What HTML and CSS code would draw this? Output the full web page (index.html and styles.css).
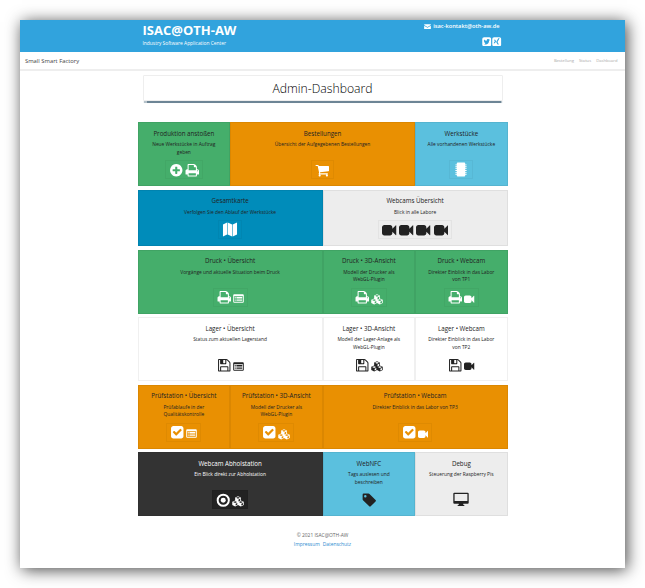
FILE: index.html
```html
<!DOCTYPE html>
<html lang="de">
<head>
<meta charset="utf-8">
<title>Admin-Dashboard</title>
<link rel="stylesheet" href="styles.css">
</head>
<body>
<svg class="sprite" aria-hidden="true">
  <symbol id="plus" viewBox="0 0 1792 1792"><path d="M1344 960v-128q0-26-19-45t-45-19h-256v-256q0-26-19-45t-45-19h-128q-26 0-45 19t-19 45v256h-256q-26 0-45 19t-19 45v128q0 26 19 45t45 19h256v256q0 26 19 45t45 19h128q26 0 45-19t19-45v-256h256q26 0 45-19t19-45zm320-64q0 209-103 385.500t-279.500 279.500-385.500 103-385.500-103-279.500-279.500-103-385.500 103-385.500 279.500-279.500 385.500-103 385.500 103 279.500 279.500 103 385.500z"/></symbol>
  <symbol id="print" viewBox="0 0 1792 1792"><path d="M448 1536h896v-256h-896v256zm0-640h896v-384h-160q-40 0-68-28t-28-68v-160h-640v640zm1152 64q0-26-19-45t-45-19-45 19-19 45 19 45 45 19 45-19 19-45zm128 0v416q0 13-9.500 22.500t-22.500 9.500h-224v160q0 40-28 68t-68 28h-960q-40 0-68-28t-28-68v-160h-224q-13 0-22.500-9.500t-9.500-22.500v-416q0-79 56.500-135.500t135.500-56.500h64v-544q0-40 28-68t68-28h672q40 0 88 20t76 48l152 152q28 28 48 76t20 88v256h64q79 0 135.500 56.500t56.500 135.500z"/></symbol>
  <symbol id="cart" viewBox="0 0 1792 1792"><path d="M704 1536q0 52-38 90t-90 38-90-38-38-90 38-90 90-38 90 38 38 90zm896 0q0 52-38 90t-90 38-90-38-38-90 38-90 90-38 90 38 38 90zm128-1088v512q0 24-16.500 42.500t-40.500 21.500l-1044 122q13 60 13 70 0 16-24 64h920q26 0 45 19t19 45-19 45-45 19h-1024q-26 0-45-19t-19-45q0-11 8-31.500t16-36 21.500-40 15.500-29.500l-177-823h-204q-26 0-45-19t-19-45 19-45 45-19h256q16 0 28.500 6.500t19.500 15.500 13 24.500 8 26 5.500 29.500 4.500 26h1201q26 0 45 19t19 45z"/></symbol>
  <symbol id="video" viewBox="0 0 1792 1792"><path d="M1792 352v1088q0 42-39 59-13 5-25 5-27 0-45-19l-403-403v166q0 119-84.500 203.500t-203.500 84.500h-704q-119 0-203.500-84.500t-84.500-203.500v-704q0-119 84.500-203.500t203.500-84.500h704q119 0 203.500 84.500t84.500 203.500v165l403-402q18-19 45-19 12 0 25 5 39 17 39 59z"/></symbol>
  <symbol id="save" viewBox="0 0 1792 1792"><path d="M512 1536h768v-384h-768v384zm896 0h128v-896q0-14-10-38.500t-20-34.500l-281-281q-10-10-34-20t-39-10v416q0 40-28 68t-68 28h-576q-40 0-68-28t-28-68v-416h-128v1280h128v-416q0-40 28-68t68-28h832q40 0 68 28t28 68v416zm-384-928v-320q0-13-9.500-22.500t-22.500-9.500h-192q-13 0-22.500 9.500t-9.500 22.500v320q0 13 9.500 22.500t22.500 9.500h192q13 0 22.500-9.500t9.500-22.500zm640 32v928q0 40-28 68t-68 28h-1344q-40 0-68-28t-28-68v-1344q0-40 28-68t68-28h928q40 0 88 20t76 48l280 280q28 28 48 76t20 88z"/></symbol>
  <symbol id="check" viewBox="0 0 1792 1792"><path d="M813 1299l614-614q19-19 19-45t-19-45l-102-102q-19-19-45-19t-45 19l-467 467-211-211q-19-19-45-19t-45 19l-102 102q-19 19-19 45t19 45l358 358q19 19 45 19t45-19zm851-883v960q0 119-84.500 203.500t-203.500 84.500h-960q-119 0-203.500-84.500t-84.500-203.500v-960q0-119 84.500-203.500t203.500-84.500h960q119 0 203.500 84.500t84.500 203.500z"/></symbol>
  <symbol id="chip" viewBox="0 0 14 16"><path d="M3.500.5h7a1 1 0 0 1 1 1v13a1 1 0 0 1-1 1h-7a1 1 0 0 1-1-1v-13a1 1 0 0 1 1-1zM1 2.600h12v.9H1zM1 4.600h12v.9H1zM1 6.600h12v.9H1zM1 8.600h12v.9H1zM1 10.600h12v.9H1zM1 12.600h12v.9H1z"/></symbol>
  <symbol id="map" viewBox="0 0 16 16"><path d="M.5 2.700 4.900.5v12.800L.5 15.500zM5.500.5l4.800 2.200v12.800l-4.800-2.200zM10.900 2.700 15.500.5v12.800l-4.600 2.200z"/></symbol>
  <symbol id="list" viewBox="0 0 11 9"><path fill-rule="evenodd" d="M1.200.3h8.600a1 1 0 0 1 1 1v6.400a1 1 0 0 1-1 1H1.200a1 1 0 0 1-1-1V1.300a1 1 0 0 1 1-1zM1.100 2.300v5.500h8.800V2.300z"/><path d="M1.700 3h1v.9h-1zM3.400 3h5.900v.9H3.400zM1.700 4.600h1v.9h-1zM3.400 4.600h5.900v.9H3.400zM1.700 6.200h1v.9h-1zM3.400 6.200h5.900v.9H3.400z"/></symbol>
  <symbol id="cubes" viewBox="0 0 24 22"><path fill-rule="evenodd" d="M12 .5l5.700 2.500v5.800L23.500 11.500v6.300L17.700 21 12 18.200 6.300 21 .5 17.800v-6.300L6.300 8.800V3zM8 3.500l4 1.800 4-1.800-4-1.600zM13 7v4l3.200-1.600V5.600zM2.300 12l4 1.800 4-1.800-4-1.700zM7.300 15.500v3.700l3.300-1.700v-3.600zM13.700 12l4 1.800 4-1.800-4-1.700zM18.700 15.500v3.700l3.300-1.700v-3.600z"/></symbol>
  <symbol id="target" viewBox="0 0 14 14"><circle cx="7" cy="7" r="5.400" fill="none" stroke="currentColor" stroke-width="1.900"/><circle cx="7" cy="7" r="2.400"/></symbol>
  <symbol id="tag" viewBox="0 0 14 14"><path fill-rule="evenodd" d="M.6 1.600a1 1 0 0 1 1-1h4.500q.8 0 1.400.6l5.600 5.600q.7.700 0 1.400l-4.700 4.700q-.7.700-1.400 0L1.200 7.300Q.6 6.800.6 6zM3.200 2a1.200 1.200 0 1 0 0 2.400 1.200 1.200 0 0 0 0-2.400z"/></symbol>
  <symbol id="monitor" viewBox="0 0 16 14"><path fill-rule="evenodd" d="M1.300.3h13.400q1 0 1 1v8.900q0 1-1 1h-4.400v1.200h1v1.200H4.700v-1.200h1v-1.200H1.300q-1 0-1-1V1.300q0-1 1-1zM1.600 1.600v7h12.800v-7z"/></symbol>
  <symbol id="mail" viewBox="0 0 14 11"><path d="M1 .3h12q.7 0 .7.800v.7L7 6 .3 1.800v-.7Q.3.300 1 .3zM.3 3.500 7 7.700l6.700-4.200v6q0 1.100-.9 1.100H1.200q-.9 0-.9-1.100z"/></symbol>
  <symbol id="twitter" viewBox="0 0 18 18"><rect x=".5" y=".5" width="17" height="17" rx="3.500"/><path class="cut" d="M14.800 5.500l-1.300 1.400c0 4.800-3.500 7.600-7.300 7.200q-1.600-.1-3-1 2 .1 3.400-1-1.700-.2-2.200-1.700h1Q3.500 9.500 3.500 7.700l1 .3Q2.900 6.500 3.900 4.500 6 7 9 7.200c-.5-3.300 2.700-4.400 4.200-2.600l1.400-.6-.8 1.300z"/></symbol>
  <symbol id="xing" viewBox="0 0 18 18"><rect x=".5" y=".5" width="17" height="17" rx="3.500"/><path class="cut" d="M3.700 5.200h2.400l1.700 2.900-2.400 3.900H3l2.400-3.900zM11.900 2.500h2.500l-4 6.800 2.700 5h-2.500l-2.700-5z"/></symbol>
</svg>

<div class="page">
  <header class="top">
    <div class="top-inner">
      <div class="brand">
        <h1>ISAC@OTH-AW</h1>
        <p>Industry Software Application Center</p>
      </div>
      <div class="contact">
        <div class="mail"><svg><use href="#mail"/></svg><span>isac-kontakt@oth-aw.de</span></div>
        <div class="social"><svg><use href="#twitter"/></svg><svg><use href="#xing"/></svg></div>
      </div>
    </div>
  </header>
  <nav class="bar">
    <span class="site">Small Smart Factory</span>
    <div class="links"><a>Bestellung</a><a>Status</a><a>Dashboard</a></div>
  </nav>
  <h2 class="heading">Admin-Dashboard</h2>

  <main class="rows">
    <section class="row">
      <article class="tile green"><h3>Produktion anstoßen</h3><p>Neue Werkstücke in Auftrag<br>geben</p><div class="icons"><svg><use href="#plus"/></svg><svg><use href="#print"/></svg></div></article>
      <article class="tile orange span2"><h3>Bestellungen</h3><p>Übersicht der Aufgegebenen Bestellungen</p><div class="icons"><svg><use href="#cart"/></svg></div></article>
      <article class="tile cyan"><h3>Werkstücke</h3><p>Alle vorhandenen Werkstücke</p><div class="icons"><svg class="wide"><use href="#chip"/></svg></div></article>
    </section>
    <section class="row short">
      <article class="tile blue span2"><h3>Gesamtkarte</h3><p>Verfolgen Sie den Ablauf der Werkstücke</p><div class="icons"><svg class="wide"><use href="#map"/></svg></div></article>
      <article class="tile grey span2"><h3>Webcams Übersicht</h3><p>Blick in alle Labore</p><div class="icons cams"><svg><use href="#video"/></svg><svg><use href="#video"/></svg><svg><use href="#video"/></svg><svg><use href="#video"/></svg></div></article>
    </section>
    <section class="row">
      <article class="tile green span2"><h3>Druck • Übersicht</h3><p>Vorgänge und aktuelle Situation beim Druck</p><div class="icons"><svg><use href="#print"/></svg><svg class="list"><use href="#list"/></svg></div></article>
      <article class="tile green"><h3>Druck • 3D-Ansicht</h3><p>Modell der Drucker als<br>WebGL-Plugin</p><div class="icons"><svg><use href="#print"/></svg><svg class="cubes"><use href="#cubes"/></svg></div></article>
      <article class="tile green"><h3>Druck • Webcam</h3><p>Direkter Einblick in das Labor<br>von TP1</p><div class="icons"><svg><use href="#print"/></svg><svg class="cam"><use href="#video"/></svg></div></article>
    </section>
    <section class="row">
      <article class="tile white span2"><h3>Lager • Übersicht</h3><p>Status zum aktuellen Lagerstand</p><div class="icons"><svg><use href="#save"/></svg><svg class="list"><use href="#list"/></svg></div></article>
      <article class="tile white"><h3>Lager • 3D-Ansicht</h3><p>Modell der Lager-Anlage als<br>WebGL-Plugin</p><div class="icons"><svg><use href="#save"/></svg><svg class="cubes"><use href="#cubes"/></svg></div></article>
      <article class="tile white"><h3>Lager • Webcam</h3><p>Direkter Einblick in das Labor<br>von TP2</p><div class="icons"><svg><use href="#save"/></svg><svg class="cam"><use href="#video"/></svg></div></article>
    </section>
    <section class="row">
      <article class="tile orange"><h3>Prüfstation • Übersicht</h3><p>Prüfablaufe in der<br>Qualitätskontrolle</p><div class="icons"><svg><use href="#check"/></svg><svg class="list"><use href="#list"/></svg></div></article>
      <article class="tile orange"><h3>Prüfstation • 3D-Ansicht</h3><p>Modell der Drucker als<br>WebGL-Plugin</p><div class="icons"><svg><use href="#check"/></svg><svg class="cubes"><use href="#cubes"/></svg></div></article>
      <article class="tile orange span2"><h3>Prüfstation • Webcam</h3><p>Direkter Einblick in das Labor von TP3</p><div class="icons"><svg><use href="#check"/></svg><svg class="cam"><use href="#video"/></svg></div></article>
    </section>
    <section class="row">
      <article class="tile dark span2"><h3>Webcam Abholstation</h3><p>Ein Blick direkt zur Abholstation</p><div class="icons"><svg><use href="#target"/></svg><svg class="cubes"><use href="#cubes"/></svg></div></article>
      <article class="tile cyan ink"><h3>WebNFC</h3><p>Tags auslesen und<br>beschreiben</p><div class="icons"><svg><use href="#tag"/></svg></div></article>
      <article class="tile grey plain"><h3>Debug</h3><p>Steuerung der Raspberry Pis</p><div class="icons"><svg class="wide"><use href="#monitor"/></svg></div></article>
    </section>
  </main>

  <footer class="foot">
    <p>© 2021 ISAC@OTH-AW</p>
    <div><a>Impressum</a><a>Datenschutz</a></div>
  </footer>
</div>
</body>
</html>
```
FILE: styles.css
```css
* { box-sizing: border-box; }
body { margin: 0; padding: 20px; background: #fff; font-family: "Open Sans", sans-serif; color: #222; overflow: hidden; }
h1, h2, h3, p { margin: 0; font-weight: 400; }
svg { display: block; fill: currentColor; }
.sprite { display: none; }

.page { width: 605px; height: 548px; background: #fff; box-shadow: 2px 2px 15px 0 rgba(0, 0, 0, .72); }

.top { height: 32px; background: #31a3dd; color: #fff; }
.top-inner { width: 360px; margin-left: 122.500px; display: flex; justify-content: space-between; }
.brand h1 { font-size: 13px; font-weight: 700; line-height: 17px; padding-top: 2px; white-space: nowrap; }
.brand p { font-size: 4.880px; line-height: 8px; white-space: nowrap; }
.contact { display: flex; flex-direction: column; align-items: flex-end; padding: 2px 1px 0 0; }
.mail { display: flex; align-items: center; gap: 2px; font-size: 5.700px; font-weight: 600; line-height: 9px; padding-right: 2px; }
.mail svg { width: 7px; height: 5.500px; }
.social { display: flex; gap: .5px; margin-top: 5.500px; }
.social svg { width: 9.500px; height: 9.500px; }
.cut { fill: #31a3dd; }

.bar { height: 19px; border-bottom: 2px solid #eee; display: flex; align-items: center; justify-content: space-between; padding: 0 7.500px 0 5px; }
.site { font-size: 5.850px; color: #444; }
.links { display: flex; gap: 5px; font-size: 4.150px; color: #aaa; }

.heading { width: 360px; height: 26px; margin: 4px 0 0 122.500px; border: 1px solid #eee; box-shadow: 0 2.500px 1px -1px #6d8595; border-radius: 1px; text-align: center; font-size: 12.200px; line-height: 25px; font-weight: 300; color: #000; }

.rows { width: 370px; margin: 21.400px 0 0 117.600px; display: grid; gap: 3.500px; }
.row { height: 64px; display: grid; grid-template-columns: repeat(4, 1fr); }
.row.short { height: 56.500px; }
.tile { border: 1px solid rgba(0, 0, 0, .06); display: flex; flex-direction: column; align-items: center; text-align: center; padding: 5.400px 0 6px; white-space: nowrap; }
.span2 { grid-column: span 2; }
.tile h3 { font-size: 6.200px; line-height: 10px; }
.tile p { font-size: 4.870px; line-height: 7.500px; margin-top: 2.500px; }
.green { background: #45ae6b; }
.orange { background: #e99002; }
.cyan { background: #5bc0de; }
.blue { background: #008cba; }
.grey { background: #ededed; }
.white { background: #fff; }
.dark { background: #333; color: #fff; }

.icons { margin-top: auto; height: 19px; padding: 0 3px; border: 1px solid rgba(0, 0, 0, .04); display: flex; align-items: center; gap: 1.500px; color: #fff; }
.icons svg { width: 14.500px; height: 14.500px; }
.icons .wide { width: 16px; height: 15px; }
.icons .list { width: 11px; height: 9px; margin-top: 3px; }
.icons .cubes { width: 12px; height: 11px; margin-top: 4px; }
.icons .cam { width: 10.500px; height: 10.500px; margin-top: 3px; }
.icons.cams { gap: 2.700px; }
.grey .icons, .white .icons, .ink .icons { color: #222; }
.white .icons, .ink .icons, .plain .icons { border-color: transparent; }
.dark .icons { background: #222; }

.foot { margin-top: 15px; text-align: center; font-size: 4.900px; line-height: 9px; color: #666; }
.foot a { color: #2b8bd0; margin: 0 1.500px; }
```
